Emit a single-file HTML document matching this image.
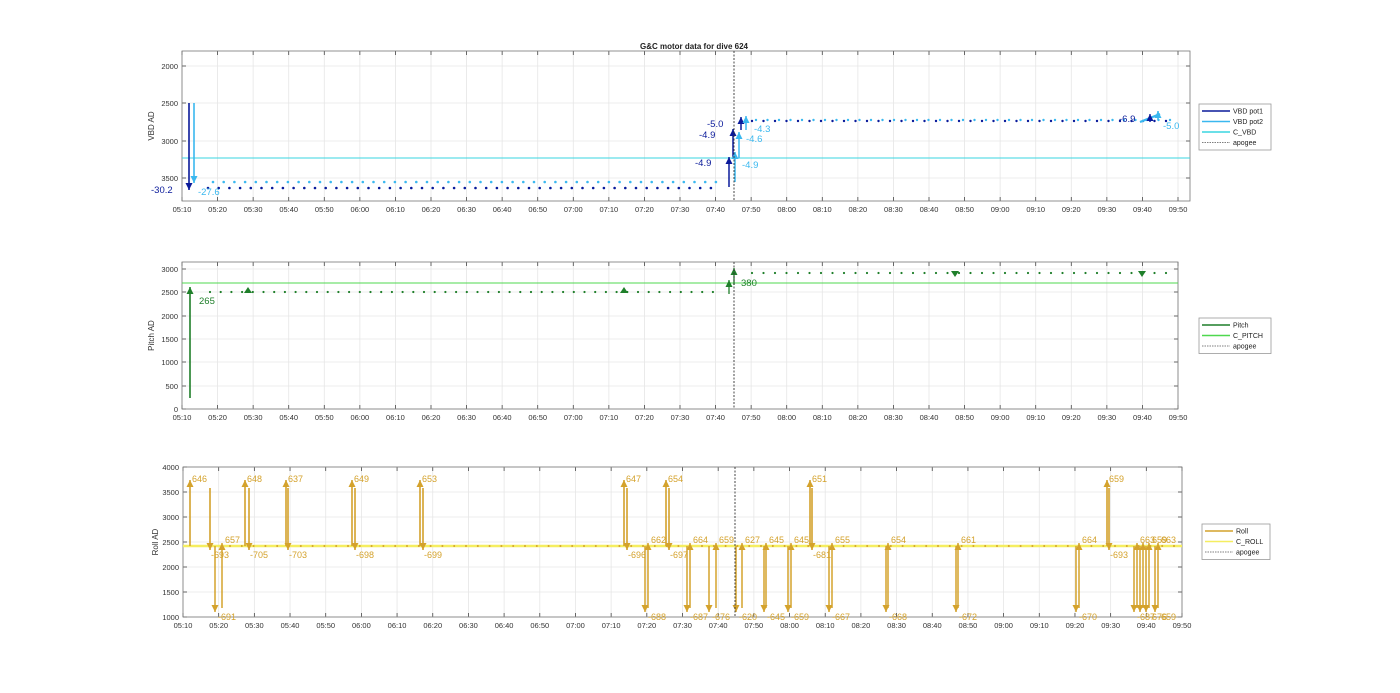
<!DOCTYPE html>
<html><head><meta charset="utf-8"><style>
html,body{margin:0;padding:0;background:#fff}
svg{display:block;font-family:"Liberation Sans",Arial,sans-serif}
</style></head><body>
<svg id="s" width="1400" height="693" viewBox="0 0 1400 693" xmlns="http://www.w3.org/2000/svg">
<rect width="1400" height="693" fill="#fff"/>
<text x="694" y="49" font-size="8" font-weight="bold" text-anchor="middle" fill="#222">G&amp;C motor data for dive 624</text>
<g id="g"></g>
</svg>
<script>
var NS="http://www.w3.org/2000/svg",G=document.getElementById('g');
function el(t,a,txt){var e=document.createElementNS(NS,t);for(var k in a)e.setAttribute(k,a[k]);if(txt!=null)e.textContent=txt;G.appendChild(e);return e;}
function line(x1,y1,x2,y2,c,w,d){var a={x1:x1,y1:y1,x2:x2,y2:y2,stroke:c,'stroke-width':w||1};if(d)a['stroke-dasharray']=d;el('line',a);}
function txt(x,y,s,c,fs,anc){el('text',{x:x,y:y,'font-size':fs||8,fill:c||'#333','text-anchor':anc||'start'},s);}
var TL=["05:10","05:20","05:30","05:40","05:50","06:00","06:10","06:20","06:30","06:40","06:50","07:00","07:10","07:20","07:30","07:40","07:50","08:00","08:10","08:20","08:30","08:40","08:50","09:00","09:10","09:20","09:30","09:40","09:50"];
function axes(x0,x1,xr,y0,y1,yt,ylab,ylabx){
 for(var i=0;i<TL.length;i++){var x=x0+i*(x1-x0)/28;line(x,y0,x,y1,'#e6e6e6',0.8);line(x,y0,x,y0+4,'#444',0.8);line(x,y1,x,y1-4,'#444',0.8);txt(x,y1+11,TL[i],'#333',7.5,'middle');}
 for(var j=0;j<yt.length;j++){line(x0,yt[j][0],xr,yt[j][0],'#e6e6e6',0.8);line(x0,yt[j][0],x0+4,yt[j][0],'#444',0.8);line(xr,yt[j][0],xr-4,yt[j][0],'#444',0.8);txt(x0-4,yt[j][0]+3,yt[j][1],'#333',7.5,'end');}
 el('rect',{x:x0,y:y0,width:xr-x0,height:y1-y0,fill:'none',stroke:'#777','stroke-width':0.8});
 el('text',{x:ylabx,y:(y0+y1)/2,'font-size':8,fill:'#333','text-anchor':'middle',transform:'rotate(-90 '+ylabx+' '+(y0+y1)/2+')'},ylab);
}
function arrow(x,ya,yb,c,w){line(x,ya,x,yb,c,w||1.4);var d=yb>ya?1:-1;el('polygon',{points:(x-3.5)+','+(yb-d*7)+' '+(x+3.5)+','+(yb-d*7)+' '+x+','+yb,fill:c});}
function dots(xs,y,c,r){for(var i=0;i<xs.length;i++)el('circle',{cx:xs[i],cy:y,r:r||1.3,fill:c});}
function legend(x,y,w,items){el('rect',{x:x,y:y,width:w,height:items.length*10.5+4,fill:'#fff',stroke:'#999','stroke-width':0.8});
 for(var i=0;i<items.length;i++){var yy=y+7+i*10.5;line(x+3,yy,x+31,yy,items[i][1],items[i][2],items[i][3]);txt(x+34,yy+2.5,items[i][0],'#222',7);}}
axes(182,1178,1190,51,201,[[66,'2000'],[103,'2500'],[141,'3000'],[178,'3500']],'VBD AD',154);
line(182,158,1190,158,'#3ad6e0',1);
var a=[],b=[];for(var x=208;x<720;x+=10.7){a.push(x);b.push(x+5);}
dots(a,188,'#0a1a9a',1.3);dots(b,182,'#3ab8ef',1.3);
var c=[],d=[];for(var x=752;x<1170;x+=11.5){c.push(x);d.push(x+4);}
dots(c,121,'#0a1a9a',1.2);dots(d,120,'#3ab8ef',1.2);
arrow(189,103,190,'#0a1a9a',1.6);arrow(194,103,183,'#3ab8ef',1.6);
txt(151,193,'-30.2','#0a1a9a',9.5);txt(198,195,'-27.6','#3ab8ef',9.5);
arrow(729,187,157,'#0a1a9a',1.5);arrow(733,158,129,'#0a1a9a',1.5);arrow(741,130,117,'#0a1a9a',1.5);
arrow(735,182,152,'#3ab8ef',1.5);arrow(739,158,132,'#3ab8ef',1.5);arrow(746,130,116,'#3ab8ef',1.5);
txt(695,166,'-4.9','#0a1a9a',9.5);txt(699,138,'-4.9','#0a1a9a',9.5);txt(707,127,'-5.0','#0a1a9a',9.5);
txt(742,168,'-4.9','#3ab8ef',9.5);txt(746,142,'-4.6','#3ab8ef',9.5);txt(754,132,'-4.3','#3ab8ef',9.5);
line(1140,122,1160,114,'#3ab8ef',2.2);arrow(1150,122,114,'#0a1a9a',1.4);arrow(1158,120,111,'#3ab8ef',1.6);
txt(1119,122,'-6.9','#0a1a9a',9.5);txt(1163,129,'-5.0','#3ab8ef',9.5);
line(734,51,734,201,'#333',0.9,'2,1.5');
legend(1199,104,72,[['VBD pot1','#0a1a9a',1.6],['VBD pot2','#3ab8ef',1.6],['C_VBD','#3ad6e0',1.6],['apogee','#555',0.8,'1.5,1']]);
axes(182,1178,1178,262,409,[[269,'3000'],[292,'2500'],[316,'2000'],[339,'1500'],[362,'1000'],[386,'500'],[409,'0']],'Pitch AD',154);
line(182,283,1178,283,'#4fd84f',1);
var e=[];for(var x=210;x<720;x+=10.7)e.push(x);dots(e,292,'#1f7f2a',1.1);
var f=[];for(var x=752;x<1172;x+=11.5)f.push(x);dots(f,273,'#1f7f2a',1.1);
arrow(190,398,287,'#1f7f2a',1.6);txt(199,304,'265','#1f7f2a',9.5);
el('polygon',{points:'244,293 252,293 248,287',fill:'#1f7f2a'});el('polygon',{points:'620,293 628,293 624,287',fill:'#1f7f2a'});
arrow(729,294,280,'#1f7f2a',1.3);arrow(734,285,268,'#1f7f2a',1.3);txt(741,286,'380','#1f7f2a',9.5);
el('polygon',{points:'951,271 959,271 955,277',fill:'#1f7f2a'});el('polygon',{points:'1138,271 1146,271 1142,277',fill:'#1f7f2a'});
line(734,262,734,409,'#333',0.9,'2,1.5');
legend(1199,318,72,[['Pitch','#1f7f2a',1.6],['C_PITCH','#4fd84f',1.6],['apogee','#555',0.8,'1.5,1']]);
axes(183,1182,1182,467,617,[[467,'4000'],[492,'3500'],[517,'3000'],[542,'2500'],[567,'2000'],[592,'1500'],[617,'1000']],'Roll AD',158);
line(183,546,1182,546,'#f5ee60',2.6);
var g=[];for(var x=230;x<1180;x+=11.8)g.push(x);dots(g,546,'#d4a22c',1);
var R='#d4a22c';
var ups=[[190,'646'],[245,'648'],[286,'637'],[352,'649'],[420,'653'],[624,'647'],[666,'654'],[810,'651'],[1107,'659']];
var dn=[[210,'-693'],[249,'-705'],[288,'-703'],[355,'-698'],[423,'-699'],[627,'-696'],[669,'-697'],[812,'-681'],[1109,'-693']];
ups.forEach(function(u){arrow(u[0],546,480,R,1.6);txt(u[0]+2,482,u[1],R,9);});
dn.forEach(function(u){arrow(u[0],488,550,R,1.6);txt(u[0]+1,558,u[1],R,9);});
var lows=[[215,222,'-691','657'],[645,648,'-688','662'],[687,690,'-687','664'],[709,716,'-676','659'],[736,742,'-620','627'],[764,766,'-645','645'],[788,791,'-659','645'],[829,832,'-667','655'],[886,888,'-668','654'],[956,958,'-672','661'],[1076,1079,'-670','664'],[1134,1137,'-687','663'],[1140,1143,'',''],[1146,1149,'-676','659'],[1155,1158,'-659','663']];
lows.forEach(function(u){arrow(u[0],546,612,R,1.5);arrow(u[1],608,543,R,1.5);if(u[2])txt(u[0]+3,620,u[2],R,9);if(u[3])txt(u[1]+3,543,u[3],R,9);});
line(735,467,735,617,'#333',0.9,'2,1.5');
legend(1202,524,68,[['Roll','#d4a22c',1.6],['C_ROLL','#f5ee60',1.6],['apogee','#555',0.8,'1.5,1']]);
</script>
</body></html>
